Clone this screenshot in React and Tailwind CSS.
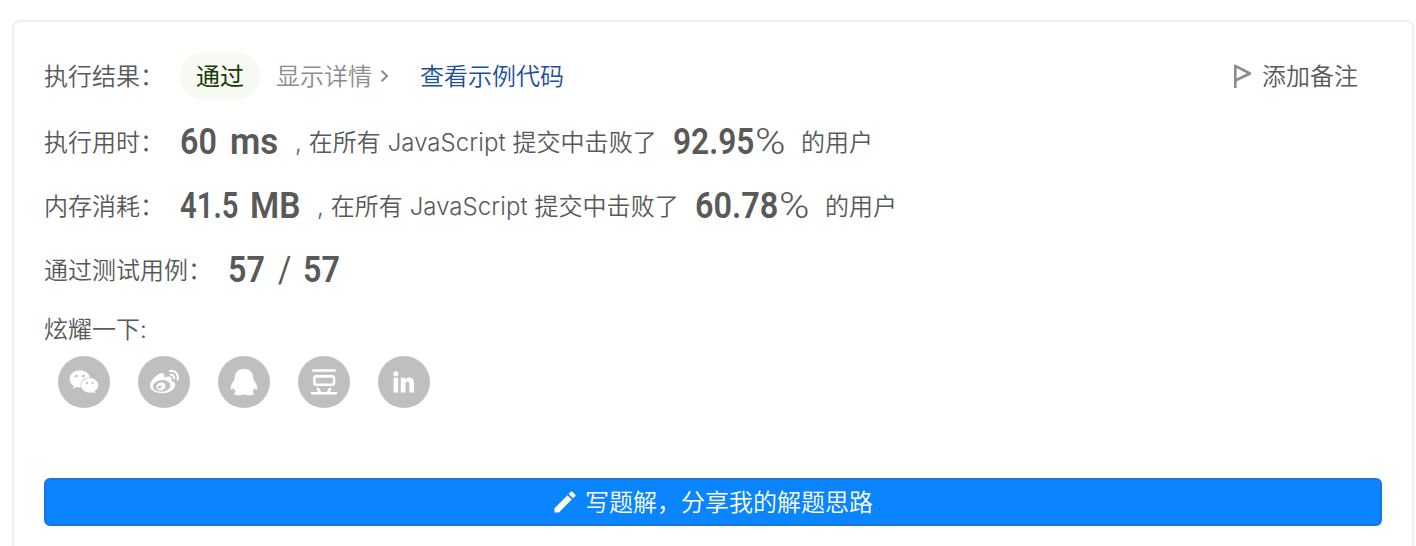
import React from "react";
import { FaWeixin, FaWeibo } from "react-icons/fa";
import { MdEdit } from "react-icons/md";

function Word({ width, scale = "scale-x-[0.86]", weight = "font-semibold", children }) {
  return (
    <span className={`-mt-0.5 inline-block shrink-0 whitespace-nowrap font-['Roboto',sans-serif] text-[37.5px] leading-[48px] ${width} ${weight}`}>
      <span className={`inline-block origin-left ${scale}`}>{children}</span>
    </span>
  );
}

function Row({ className, label, labelWidth = "w-[136px]", children }) {
  return (
    <div className={`flex h-12 items-center ${className}`}>
      <span className={`mt-0.5 shrink-0 ${labelWidth}`}>{label}</span>
      {children}
    </div>
  );
}

function Share({ children }) {
  return (
    <button className="flex size-[52px] items-center justify-center rounded-full bg-[#bfbfbf] text-white">
      {children}
    </button>
  );
}

function Penguin() {
  return (
    <svg width="28" height="28" viewBox="0 0 28 28" fill="currentColor">
      <path d="M14 0.700C8.800 0.700 5 4.200 4.800 9.200C4.700 10 4.600 10.700 4.200 11.400C4 12.400 3.400 13.500 2.600 14.600C1.200 16.600 0.300 19.600 1 21.200C1.500 22.400 3.100 21 3.800 20C4.200 21.700 5 22.900 6 24C4.700 24.400 4 25 4.200 25.900C4.500 27.400 10.700 27.700 14 26.200C17.300 27.700 23.500 27.400 23.800 25.900C24 25 23.300 24.400 22 24C23 22.900 23.800 21.700 24.200 20C24.900 21 26.500 22.400 27 21.200C27.700 19.600 26.800 16.600 25.400 14.600C24.600 13.500 24 12.400 23.800 11.400C23.400 10.700 23.300 10 23.200 9.200C23 4.200 19.200 0.700 14 0.700Z" />
    </svg>
  );
}

function Douban() {
  return (
    <svg width="28" height="28" viewBox="0 0 28 28" fill="none" stroke="currentColor" strokeWidth="2.600" strokeLinecap="round" strokeLinejoin="round">
      <path d="M3.300 2.500H24.700" />
      <rect x="4.400" y="8.400" width="19.600" height="8.400" rx="2" />
      <path d="M8 20.800l2 4M20 20.800l-2 4M2 25.300H26" />
    </svg>
  );
}

function LinkedIn() {
  return (
    <svg className="-ml-0.5" width="23" height="24" viewBox="0 0 24 24" fill="currentColor">
      <circle cx="4" cy="3.500" r="2.700" />
      <path d="M1.600 7.600H6.400V23H1.600ZM9.200 7.600H13.800V9.500C14.900 8 16.300 7.200 18 7.200C21.400 7.200 23 9.500 23 13.200V23H18.200V14.200C18.200 12.300 17.600 11.400 16.300 11.400C14.800 11.400 14 12.600 14 14.500V23H9.200Z" />
    </svg>
  );
}

export default function App() {
  return (
    <div className="h-[546px] overflow-hidden bg-white pt-5 pr-0.5 pl-3 font-['Inter','Noto_Sans_CJK_SC',sans-serif] text-2xl font-[350] text-[#595959]">
      <div className="h-[560px] rounded-lg border-2 border-[#efefef] px-[30px] pt-[30px]">
        <Row label="执行结果：">
          <span className="flex h-12 w-20 items-center justify-center rounded-full bg-[#f7faf3] pt-0.5 font-normal text-[#173b06]">通过</span>
          <button className="ml-4 flex items-center pt-0.5 text-[#8c8c8c]">
            显示详情
            <svg className="-mt-0.5 ml-2" width="10" height="14" viewBox="0 0 10 14" fill="none" stroke="currentColor" strokeWidth="2">
              <path d="M1.500 1.700L7 7l-5.500 5.300" />
            </svg>
          </button>
          <a className="ml-[30px] pt-0.5 text-[#1d4f9c]">查看示例代码</a>
          <button className="mr-6 ml-auto flex items-center pt-0.5">
            <svg className="-mt-0.5 mr-2" width="22" height="26" viewBox="0 0 22 26" fill="none" stroke="#8c8c8c" strokeWidth="2.600">
              <path d="M3.300 25V2.800L18 10.500L3.300 17.500" strokeLinejoin="round" />
            </svg>
            添加备注
          </button>
        </Row>
        <Row label="执行用时：" className="mt-[18px]">
          <Word width="w-[50px]">60</Word>
          <Word width="w-[65px]" scale="scale-x-[0.93]">ms</Word>
          <span className="mt-0.5 w-[378px] shrink-0 whitespace-pre tracking-[0.06px]">, 在所有 JavaScript 提交中击败了</span>
          <Word width="w-[82px]" scale="scale-x-[0.845]">92.95</Word>
          <Word width="w-[46px]" weight="font-light" scale="scale-x-[1.1]">%</Word>
          <span className="mt-0.5">的用户</span>
        </Row>
        <Row label="内存消耗：" className="mt-4">
          <Word width="w-[70px]" scale="scale-x-[0.78]">41.5</Word>
          <Word width="w-[67px]" scale="scale-x-[0.89]">MB</Word>
          <span className="mt-0.5 w-[378px] shrink-0 whitespace-pre tracking-[0.06px]">, 在所有 JavaScript 提交中击败了</span>
          <Word width="w-[84px]" scale="scale-x-[0.865]">60.78</Word>
          <Word width="w-[46px]" weight="font-light" scale="scale-x-[1.1]">%</Word>
          <span className="mt-0.5">的用户</span>
        </Row>
        <Row label="通过测试用例：" labelWidth="w-[184px]" className="mt-4">
          <Word width="w-[50px]">57</Word>
          <Word width="w-[25px]" weight="font-normal">/</Word>
          <Word width="w-[50px]">57</Word>
        </Row>
        <div className="mt-5 h-[42px] leading-[32px]">炫耀一下:</div>
        <div className="ml-3.5 flex gap-7">
          <Share><FaWeixin size={30} /></Share>
          <Share><FaWeibo size={29} /></Share>
          <Share><Penguin /></Share>
          <Share><Douban /></Share>
          <Share><LinkedIn /></Share>
        </div>
        <button className="mt-[70px] flex h-12 w-full items-center justify-center rounded-md border-2 border-[#1976d8] bg-[#0a84ff] pt-0.5 pr-0.5 text-white">
          <MdEdit className="-mt-0.5 mr-1.5" size={28} />
          写题解，分享我的解题思路
        </button>
      </div>
    </div>
  );
}
